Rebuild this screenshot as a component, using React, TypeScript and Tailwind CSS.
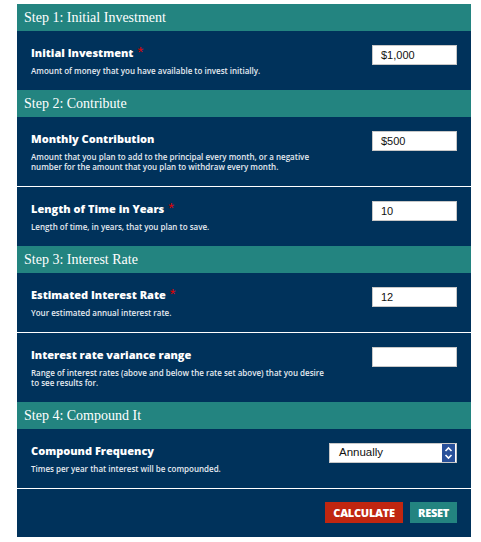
import React from "react";

const sans = { fontFamily: '"Open Sans", "Liberation Sans", sans-serif' };
const arial = { fontFamily: '"Liberation Sans", Arial, sans-serif' };
const slab = { fontFamily: '"Liberation Serif", "Times New Roman", serif' };

function Header({ children }: { children: React.ReactNode }) {
  return (
    <div
      className="h-[27px] bg-[#238480] flex items-center px-[7px] text-white text-[14px] leading-none"
      style={slab}
    >
      {children}
    </div>
  );
}

function Field({
  label,
  required,
  desc,
  value,
  sep,
  control,
}: {
  label: string;
  required?: boolean;
  desc: React.ReactNode;
  value?: string;
  sep?: boolean;
  control?: React.ReactNode;
}) {
  return (
    <div className={`flex justify-between px-[14px] pt-[14px] pb-[14px] ${sep ? "border-b border-white" : ""}`}>
      <div className="flex flex-col" style={sans}>
        <div className="h-[16px] flex items-start text-white text-[11px] leading-[16px] font-extrabold">
          <span>{label}</span>
          {required && (
            <span className="ml-[4px] text-[#e00000] text-[15px] leading-[14px] font-normal" style={arial}>
              *
            </span>
          )}
        </div>
        <div className="mt-[5px] text-[#e6ebf1] text-[8px] leading-[10px] font-semibold">{desc}</div>
      </div>
      {control ?? (
        <div
          className="w-[85px] h-[20px] bg-white border border-[#c8c8c8] flex items-center pl-[8px] text-[11px] text-[#111] shrink-0"
          style={arial}
        >
          {value}
        </div>
      )}
    </div>
  );
}

export default function App() {
  return (
    <div className="w-[481px] h-[542px] bg-white overflow-hidden">
      <div className="pt-[4px] pl-[17px]">
        <div className="w-[454px] bg-[#00325b]">
          <Header>Step 1: Initial Investment</Header>
          <Field
            label="Initial Investment"
            required
            desc="Amount of money that you have available to invest initially."
            value="$1,000"
          />
          <Header>Step 2: Contribute</Header>
          <Field
            label="Monthly Contribution"
            desc={
              <>
                Amount that you plan to add to the principal every month, or a negative
                <br />
                number for the amount that you plan to withdraw every month.
              </>
            }
            value="$500"
            sep
          />
          <Field
            label="Length of Time in Years"
            required
            desc="Length of time, in years, that you plan to save."
            value="10"
          />
          <Header>Step 3: Interest Rate</Header>
          <Field
            label="Estimated Interest Rate"
            required
            desc="Your estimated annual interest rate."
            value="12"
            sep
          />
          <Field
            label="Interest rate variance range"
            desc={
              <>
                Range of interest rates (above and below the rate set above) that you desire
                <br />
                to see results for.
              </>
            }
            value=""
          />
          <Header>Step 4: Compound It</Header>
          <Field
            label="Compound Frequency"
            desc="Times per year that interest will be compounded."
            sep
            control={
              <div
                className="w-[128px] h-[20px] bg-white border border-[#c8c8c8] flex items-center justify-between pl-[9px] pr-[1px] text-[11.5px] text-[#111] shrink-0"
                style={arial}
              >
                <span>Annually</span>
                <span className="w-[13px] h-[18px] bg-[#28509a] flex items-center justify-center">
                  <svg width="9" height="14" viewBox="0 0 9 14" fill="none" stroke="white" strokeWidth="1.6">
                    <path d="M1.5 5 L4.5 2 L7.5 5" />
                    <path d="M1.5 9 L4.5 12 L7.5 9" />
                  </svg>
                </span>
              </div>
            }
          />
          <div className="flex justify-end gap-[7px] px-[14px] pt-[13px] pb-[14px]" style={sans}>
            <button className="w-[78px] h-[21px] bg-[#c02610] text-white text-[11px] font-extrabold leading-none tracking-tight">
              CALCULATE
            </button>
            <button className="w-[47px] h-[21px] bg-[#238480] text-white text-[11px] font-extrabold leading-none tracking-tight">
              RESET
            </button>
          </div>
        </div>
      </div>
    </div>
  );
}
